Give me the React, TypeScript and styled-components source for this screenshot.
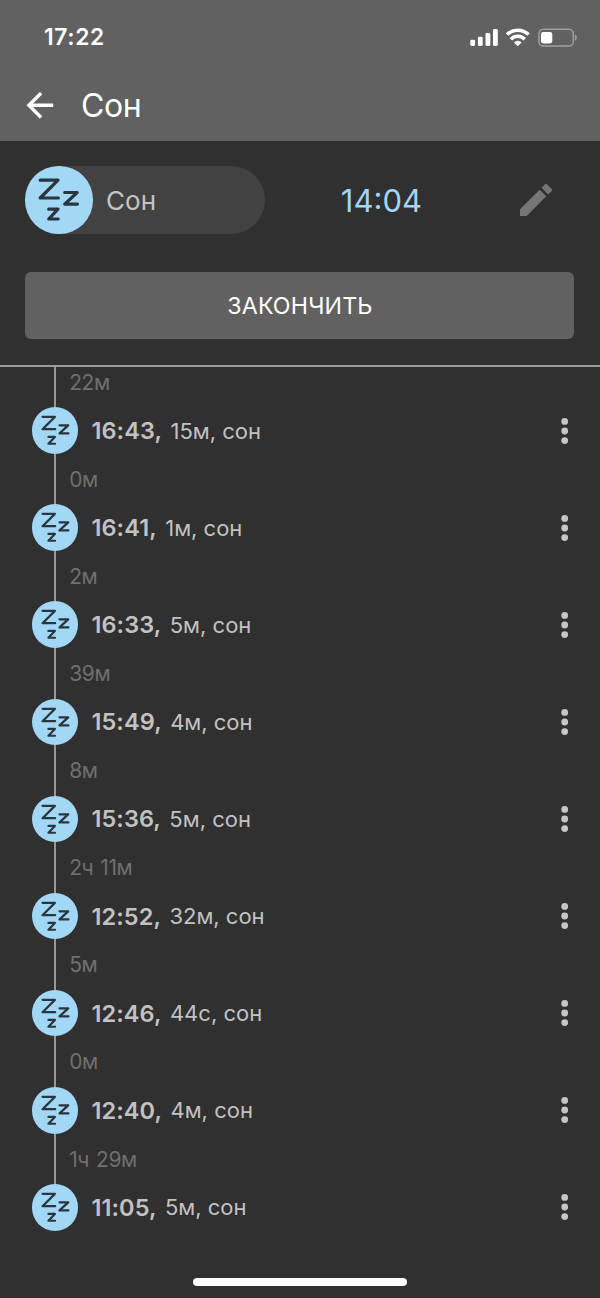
import React from "react";
import styled, { createGlobalStyle } from "styled-components";

const GlobalStyle = createGlobalStyle`
  *, *::before, *::after { box-sizing: border-box; }
  body {
    margin: 0;
    background: #303030;
    font-family: Inter, "Liberation Sans", sans-serif;
  }
`;

const Screen = styled.div`
  width: 600px;
  height: 1298px;
  display: flex;
  flex-direction: column;
  background: #303030;
  overflow: hidden;
`;

const Header = styled.header`
  flex: none;
  height: 141px;
  background: #616161;
  color: #fff;
`;

const StatusBar = styled.div`
  height: 74px;
  display: flex;
  align-items: center;
  justify-content: space-between;
  padding: 0 22px 0 44px;
`;

const Clock = styled.span`
  font-size: 22.8px;
  font-weight: 600;
  letter-spacing: 0.65px;
  padding-bottom: 2px;
`;

const TitleBar = styled.div`
  height: 67px;
  display: flex;
  align-items: center;
  gap: 27px;
  padding: 0 26px;
  margin-top: -2px;
`;

const Title = styled.h1`
  margin: 0;
  font-size: 32px;
  line-height: 40px;
  font-weight: 400;
  letter-spacing: -0.4px;
`;

const Tracker = styled.section`
  flex: none;
  height: 226px;
  padding: 25.4px 25.4px 0;
  border-bottom: 2px solid #9c9c9c;
`;

const TrackerRow = styled.div`
  display: flex;
  align-items: center;
  height: 67.2px;
`;

const Activity = styled.div`
  width: 240px;
  height: 67.2px;
  display: flex;
  align-items: center;
  gap: 13.5px;
  border-radius: 34px;
  background: #424242;
  color: #c4c4c4;
`;

const ActivityName = styled.span`
  padding-top: 2px;
  font-size: 26px;
`;

const Elapsed = styled.div`
  width: 232px;
  padding-top: 1px;
  text-align: center;
  color: #a3d5f5;
  font-size: 31px;
`;

const EditButton = styled.button`
  display: flex;
  margin-left: 22.4px;
  padding: 0;
  border: 0;
  background: none;
  color: #767676;
`;

const FinishButton = styled.button`
  display: block;
  width: 549px;
  height: 67px;
  margin-top: 38.4px;
  padding: 2px 0 0;
  border: 0;
  border-radius: 6px;
  background: #616161;
  color: #fff;
  font-family: inherit;
  font-size: 23.2px;
  letter-spacing: 0.15px;
`;

const Badge = styled.span<{ $size: number }>`
  flex: none;
  display: flex;
  width: ${(p) => p.$size}px;
  height: ${(p) => p.$size}px;
  border-radius: 50%;
  background: #a3d7f6;
`;

const Timeline = styled.main`
  flex: 1;
  display: flex;
  flex-direction: column;
`;

const Gap = styled.div<{ $first: boolean }>`
  flex: none;
  height: ${(p) => (p.$first ? 40.3 : 50.5)}px;
  margin-left: 54.2px;
  padding-left: 13px;
  padding-top: ${(p) => (p.$first ? 1.5 : 12)}px;
  border-left: 2px solid #979797;
  color: #6f6f6f;
  font-size: 21px;
  line-height: 27px;
  letter-spacing: -0.4px;
  word-spacing: 1.5px;
`;

const Entry = styled.div`
  flex: none;
  display: flex;
  align-items: center;
  height: 46.6px;
  padding: 0 30px 0 31.8px;
`;

const EntryText = styled.div`
  flex: 1;
  display: flex;
  align-items: center;
  margin-left: 13px;
  gap: 8.4px;
  color: #c2c2c2;
  font-size: 22px;
`;

const Start = styled.strong`
  font-size: 23.5px;
  font-weight: 600;
  letter-spacing: 0.1px;
`;

const Details = styled.span`
  line-height: 26px;
`;

const MenuButton = styled.button`
  display: flex;
  padding: 0;
  border: 0;
  background: none;
  color: #c6c6c6;
`;

const BottomBar = styled.footer`
  flex: none;
  height: 20px;
  display: flex;
  justify-content: center;
  align-items: flex-start;
`;

const HomeIndicator = styled.div`
  width: 214.5px;
  height: 8px;
  border-radius: 4px;
  background: #fff;
`;

const SleepIcon = ({ size }: { size: number }) => (
  <Badge $size={size}>
    <svg width={size} height={size} viewBox="0 0 67.2 67.2" fill="none" stroke="#29363f" strokeWidth="3.2" strokeLinecap="round" strokeLinejoin="round">
      <path d="M15.2 14.2H33L15.2 32H33.4" />
      <path d="M39.7 26.5H52.2L39.7 38.1H52.5" />
      <path d="M23.7 43.2H33L23.7 53H33.2" />
    </svg>
  </Badge>
);

const StatusIcons = () => (
  <svg width="108" height="20" viewBox="0 0 108 20" fill="#fff">
    <rect x="0.3" y="12.7" width="4.8" height="6.3" rx="1.4" />
    <rect x="7.9" y="9.7" width="4.8" height="9.3" rx="1.4" />
    <rect x="15.5" y="6" width="4.8" height="13" rx="1.4" />
    <rect x="23" y="2" width="4.8" height="17" rx="1.4" />
    <g fill="none" stroke="#fff" strokeWidth="3.5">
      <path d="M37 7.6A15.5 15.5 0 0 1 58.6 7.6" />
      <path d="M40.9 12.2A9.8 9.8 0 0 1 54.7 12.2" />
    </g>
    <path d="M47.8 19.2 44 15.4A5.4 5.4 0 0 1 51.6 15.4Z" />
    <rect x="68.9" y="2.2" width="34.4" height="16.8" rx="4.6" fill="none" stroke="#a0a0a0" strokeWidth="1.5" />
    <path d="M105 7.8C107.5 8.6 107.5 12.6 105 13.4Z" fill="#a0a0a0" />
    <rect x="71" y="4.9" width="11.3" height="11.5" rx="2.4" />
  </svg>
);

const BackIcon = () => (
  <svg width="28" height="28" viewBox="0 0 28 28" fill="none" stroke="#fff" strokeWidth="3.4">
    <path d="M27.2 13.3H2.8M15.1 1.1 2.9 13.3l12.2 12.2" />
  </svg>
);

const PencilIcon = () => (
  <svg width="32" height="32" viewBox="3 2.99 18.01 18.01" fill="currentColor">
    <path d="M3 17.25V21h3.75L17.81 9.94l-3.75-3.75L3 17.25zM20.71 7.04a1 1 0 0 0 0-1.41l-2.34-2.34a1 1 0 0 0-1.41 0l-1.83 1.83 3.75 3.75 1.83-1.83z" />
  </svg>
);

const DotsIcon = () => (
  <svg width="10" height="28" viewBox="0 0 10 28" fill="currentColor">
    <circle cx="4.7" cy="4.4" r="3.4" />
    <circle cx="4.7" cy="14" r="3.4" />
    <circle cx="4.7" cy="23.6" r="3.4" />
  </svg>
);

const entries = [
  { gap: "22м", start: "16:43,", details: "15м, сон" },
  { gap: "0м", start: "16:41,", details: "1м, сон" },
  { gap: "2м", start: "16:33,", details: "5м, сон" },
  { gap: "39м", start: "15:49,", details: "4м, сон" },
  { gap: "8м", start: "15:36,", details: "5м, сон" },
  { gap: "2ч 11м", start: "12:52,", details: "32м, сон" },
  { gap: "5м", start: "12:46,", details: "44с, сон" },
  { gap: "0м", start: "12:40,", details: "4м, сон" },
  { gap: "1ч 29м", start: "11:05,", details: "5м, сон" },
];

export default function App() {
  return (
    <Screen>
      <GlobalStyle />
      <Header>
        <StatusBar>
          <Clock>17:22</Clock>
          <StatusIcons />
        </StatusBar>
        <TitleBar>
          <BackIcon />
          <Title>Сон</Title>
        </TitleBar>
      </Header>
      <Tracker>
        <TrackerRow>
          <Activity>
            <SleepIcon size={67.2} />
            <ActivityName>Сон</ActivityName>
          </Activity>
          <Elapsed>14:04</Elapsed>
          <EditButton aria-label="Изменить">
            <PencilIcon />
          </EditButton>
        </TrackerRow>
        <FinishButton>ЗАКОНЧИТЬ</FinishButton>
      </Tracker>
      <Timeline>
        {entries.map((e, i) => (
          <React.Fragment key={e.start}>
            <Gap $first={i === 0}>{e.gap}</Gap>
            <Entry>
              <SleepIcon size={46.6} />
              <EntryText>
                <Start>{e.start}</Start>
                <Details>{e.details}</Details>
              </EntryText>
              <MenuButton aria-label="Меню">
                <DotsIcon />
              </MenuButton>
            </Entry>
          </React.Fragment>
        ))}
      </Timeline>
      <BottomBar>
        <HomeIndicator />
      </BottomBar>
    </Screen>
  );
}
